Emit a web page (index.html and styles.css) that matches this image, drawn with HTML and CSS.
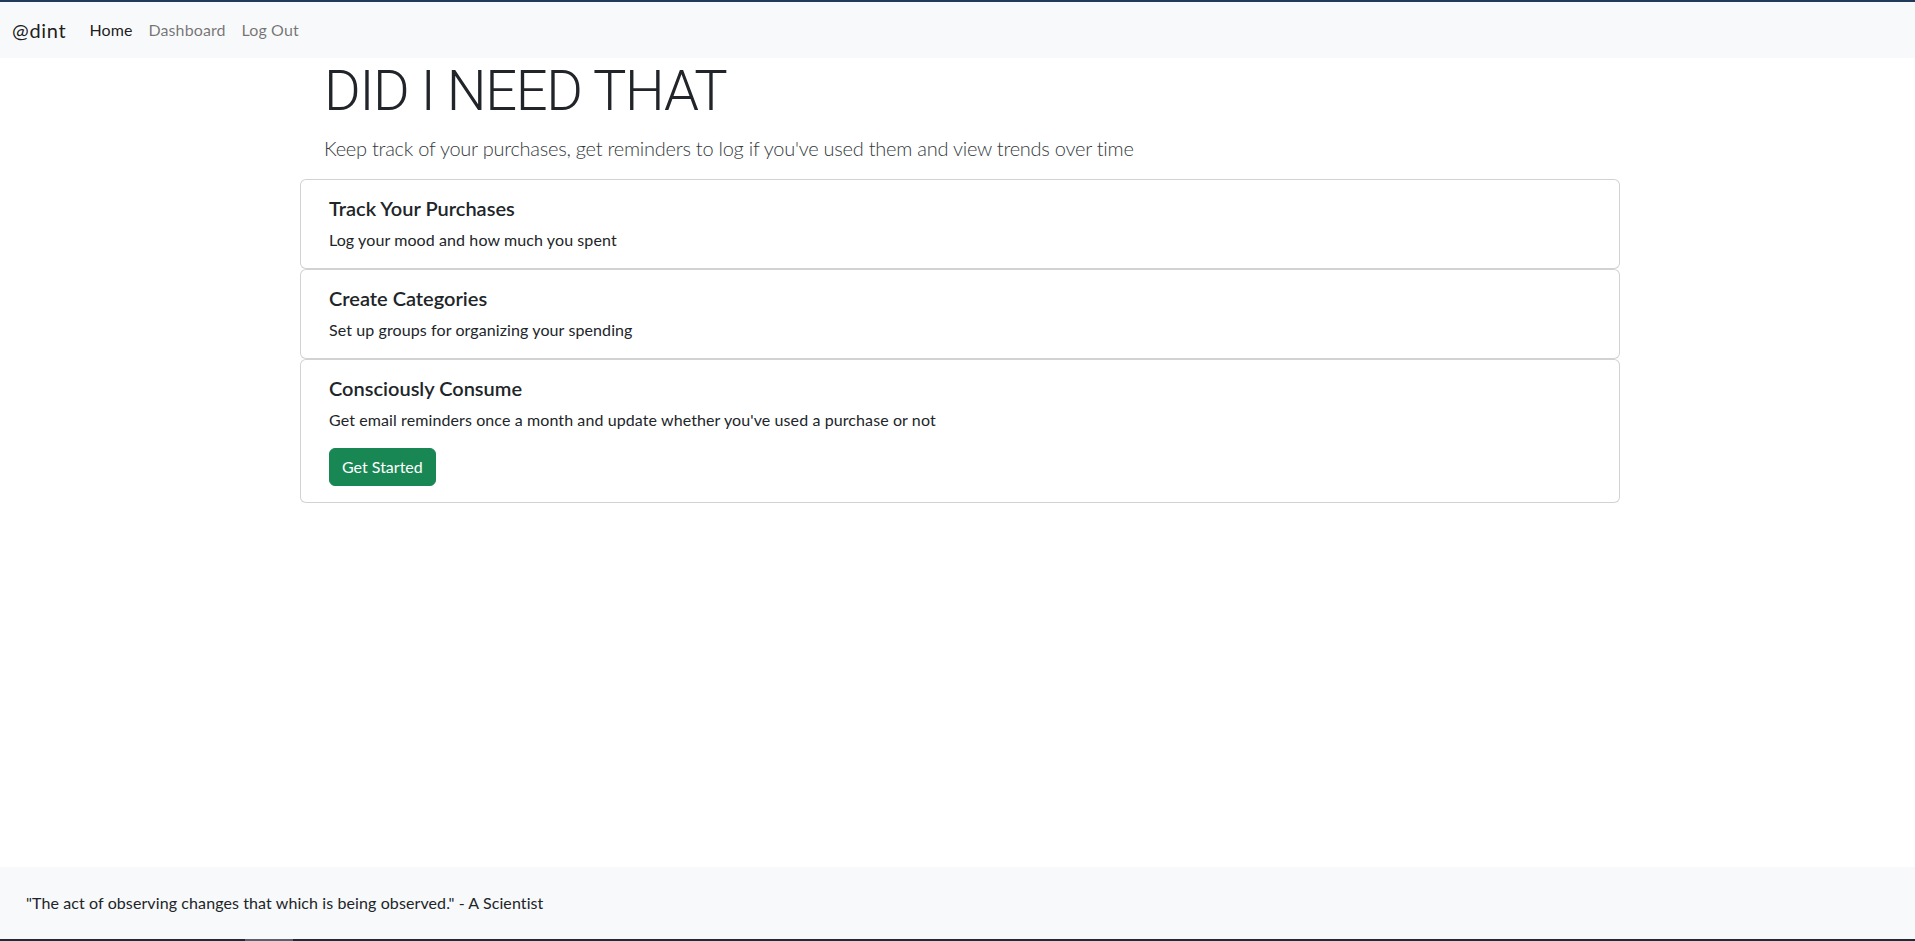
FILE: index.html
```html
<!DOCTYPE html>
<html lang="en">
<head>
<meta charset="utf-8">
<title>Did I Need That</title>
<link rel="stylesheet" href="styles.css">
</head>
<body>
<nav class="navbar">
  <a class="brand" href="#">@dint</a>
  <ul class="nav">
    <li><a class="nav-link active" href="#">Home</a></li>
    <li><a class="nav-link" href="#">Dashboard</a></li>
    <li><a class="nav-link" href="#">Log Out</a></li>
  </ul>
</nav>
<main class="container">
  <header class="hero">
    <h1 class="display">DID I NEED THAT</h1>
    <p class="lead">Keep track of your purchases, get reminders to log if you've used them and view trends over time</p>
  </header>
  <section class="card">
    <h5 class="card-title">Track Your Purchases</h5>
    <p class="card-text">Log your mood and how much you spent</p>
  </section>
  <section class="card">
    <h5 class="card-title">Create Categories</h5>
    <p class="card-text">Set up groups for organizing your spending</p>
  </section>
  <section class="card">
    <h5 class="card-title">Consciously Consume</h5>
    <p class="card-text spaced">Get email reminders once a month and update whether you've used a purchase or not</p>
    <a class="btn" href="#">Get Started</a>
  </section>
</main>
<footer class="footer">
  <p class="quote">"The act of observing changes that which is being observed." - A Scientist</p>
</footer>
<div class="bottom-strip"><span class="strip-mark"></span></div>
</body>
</html>
```

FILE: styles.css
```css
* { box-sizing: border-box; }

html, body { height: 100%; }

body {
  margin: 0;
  font-family: Lato, "Noto Sans", "Liberation Sans", sans-serif;
  font-size: 16px;
  line-height: 1.5;
  letter-spacing: 0.1px;
  color: #212529;
  background: #fff;
  border-top: 2px solid #213a5a;
  display: flex;
  flex-direction: column;
  min-height: 100vh;
}

a { text-decoration: none; }

.navbar {
  height: 56px;
  background: #f8f9fa;
  display: flex;
  align-items: center;
  padding: 0 12px;
  flex-shrink: 0;
}

.brand {
  font-size: 20px;
  color: rgba(0,0,0,0.9);
  margin-right: 15px;
  line-height: 30px;
  letter-spacing: 0.7px;
}

.nav {
  list-style: none;
  margin: 0;
  padding: 0;
  display: flex;
}

.nav-link {
  display: block;
  padding: 8px;
  color: rgba(0,0,0,0.55);
}

.nav-link.active { color: rgba(0,0,0,0.9); }

.container {
  width: 1325px;
  margin: 0 auto;
  padding-left: 5px;
}

.hero { padding-left: 24px; }

.display {
  margin: 0 0 8px;
  font-family: Roboto, Lato, sans-serif;
  font-size: 56px;
  font-weight: 300;
  line-height: 1.2;
  letter-spacing: -1.3px;
  color: #212529;
}

.lead {
  margin: 0 0 16px;
  font-size: 20px;
  font-weight: 300;
  letter-spacing: -0.25px;
  color: #343a40;
}

.card {
  border: 1px solid rgba(0,0,0,0.175);
  border-radius: 6px;
  padding: 16px 28px;
  background: #fff;
}

.card-title {
  margin: 0 0 8px;
  font-size: 20px;
  font-weight: 600;
  line-height: 1.2;
  letter-spacing: 0;
}

.card-text { margin: 0; }
.card-text.spaced { margin-bottom: 16px; }

.btn {
  display: inline-block;
  padding: 6px 12px;
  border: 1px solid #198754;
  border-radius: 6px;
  background: #198754;
  color: #fff;
  line-height: 24px;
  letter-spacing: 0;
}

.footer {
  margin-top: auto;
  background: #f8f9fa;
  padding: 24px 26px;
  flex-shrink: 0;
}

.quote { margin: 0; }

.bottom-strip {
  height: 2px;
  background: #1e2b36;
  flex-shrink: 0;
  padding-left: 245px;
}

.strip-mark {
  display: block;
  width: 48px;
  height: 2px;
  background: #56636d;
}
```
